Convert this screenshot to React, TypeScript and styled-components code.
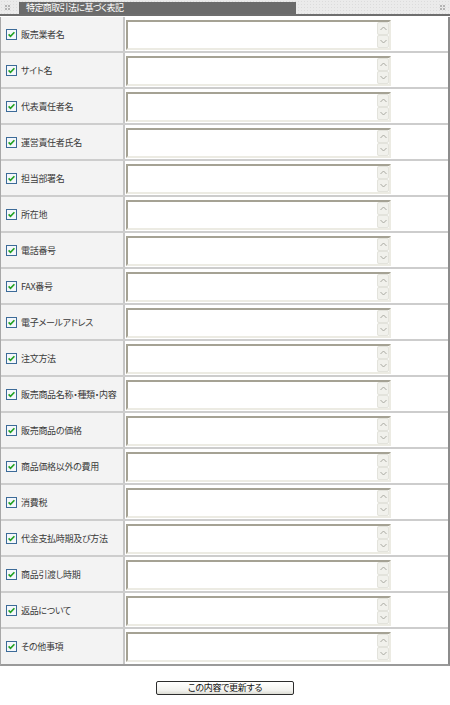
import styled, { createGlobalStyle } from "styled-components";

const FIELDS = [
  "販売業者名",
  "サイト名",
  "代表責任者名",
  "運営責任者氏名",
  "担当部署名",
  "所在地",
  "電話番号",
  "FAX番号",
  "電子メールアドレス",
  "注文方法",
  "販売商品名称・種類・内容",
  "販売商品の価格",
  "商品価格以外の費用",
  "消費税",
  "代金支払時期及び方法",
  "商品引渡し時期",
  "返品について",
  "その他事項",
];

const GlobalStyle = createGlobalStyle`
  body {
    margin: 0;
    background: #ffffff;
    font-family: "Noto Sans CJK JP", "Liberation Sans", sans-serif;
  }
`;

const Page = styled.div`
  width: 450px;
`;

const Header = styled.div`
  display: flex;
  align-items: center;
  height: 14px;
  background-color: #ebebeb;
  background-image: radial-gradient(#dcdcdc 0.6px, transparent 0.8px);
  background-size: 3px 3px;
  border-bottom: 2px solid #6e6e6e;
`;

const Grip = styled.div<{ $right?: boolean }>`
  display: grid;
  grid-template-columns: 2px 2px;
  grid-template-rows: 2px 2px;
  gap: 1px;
  margin: 0 ${(p) => (p.$right ? "5px" : "9px")} 0 ${(p) => (p.$right ? "0" : "5px")};

  span {
    background: #b4b4b4;
  }
`;

const Tab = styled.div`
  width: 270px;
  height: 12px;
  margin-top: 1px;
  padding-left: 7px;
  background: #6b6b6b;
  color: #ffffff;
  font-size: 9px;
  line-height: 12px;
  letter-spacing: -0.6px;
  font-feature-settings: "palt";
  white-space: nowrap;
`;

const Spacer = styled.div`
  flex: 1;
`;

const Table = styled.div`
  margin-top: 1px;
  border-left: 1px solid #a8a8a8;
  border-right: 2px solid #8c8c8c;
  border-bottom: 2px solid #9a9a9a;
`;

const Row = styled.div`
  display: flex;
  height: 34px;
  border-bottom: 2px solid #cdcdcd;

  &:last-child {
    border-bottom: none;
    height: 35px;
  }
`;

const Label = styled.label`
  display: flex;
  align-items: center;
  gap: 4px;
  width: 117px;
  padding-left: 5px;
  background: #f3f3f3;
  border-right: 2px solid #c6c6c6;
  color: #3a3a3a;
  font-size: 9px;
  letter-spacing: -0.3px;
  font-feature-settings: "palt";
  white-space: nowrap;
`;

const Value = styled.div`
  flex: 1;
  padding: 3px 0 0 1px;
  background: #ffffff;
`;

const TextBox = styled.div`
  display: flex;
  width: 261px;
  height: 26px;
  border-style: solid;
  border-width: 2px;
  border-color: #a5a294 #ecebe3 #ecebe3 #a5a294;
  background: #ffffff;
`;

const Area = styled.textarea`
  flex: 1;
  border: none;
  padding: 0;
  resize: none;
  outline: none;
  background: transparent;
`;

const Rail = styled.div`
  display: flex;
  flex-direction: column;
  justify-content: space-between;
  width: 12px;
  background: #fbfbf8;
`;

const Arrow = styled.div`
  display: flex;
  align-items: center;
  justify-content: center;
  height: 11px;
  background: #f1f1ec;
  border: 1px solid #e3e3dc;
  border-radius: 2px;
`;

const Footer = styled.div`
  display: flex;
  justify-content: center;
  padding-top: 15px;
`;

const Submit = styled.button`
  width: 138px;
  height: 14px;
  padding: 0;
  border: 1px solid #2c2c2c;
  border-radius: 2px;
  background: linear-gradient(#ffffff, #f2f2ee 70%, #dcdcd4);
  color: #111111;
  font-family: "Noto Sans CJK JP", sans-serif;
  font-size: 9px;
  line-height: 12px;
  letter-spacing: -0.3px;
  font-feature-settings: "palt";
`;

const CheckIcon = () => (
  <svg width="11" height="11" viewBox="0 0 11 11">
    <rect x="0.5" y="0.5" width="10" height="10" fill="#f4f7fb" stroke="#3c6b98" />
    <path d="M2.6 5.4 L4.5 7.4 L8.4 3.2" fill="none" stroke="#21a121" strokeWidth="1.6" />
  </svg>
);

const Chevron = ({ up }: { up?: boolean }) => (
  <svg width="7" height="5" viewBox="0 0 7 5">
    <path
      d={up ? "M0.5 4 L3.5 1 L6.5 4" : "M0.5 1 L3.5 4 L6.5 1"}
      fill="none"
      stroke="#a8a8a0"
      strokeWidth="1"
    />
  </svg>
);

export default function App() {
  return (
    <Page>
      <GlobalStyle />
      <Header>
        <Grip>
          <span />
          <span />
          <span />
          <span />
        </Grip>
        <Tab>特定商取引法に基づく表記</Tab>
        <Spacer />
        <Grip $right>
          <span />
          <span />
          <span />
          <span />
        </Grip>
      </Header>

      <Table>
        {FIELDS.map((name) => (
          <Row key={name}>
            <Label>
              <CheckIcon />
              {name}
            </Label>
            <Value>
              <TextBox>
                <Area />
                <Rail>
                  <Arrow>
                    <Chevron up />
                  </Arrow>
                  <Arrow>
                    <Chevron />
                  </Arrow>
                </Rail>
              </TextBox>
            </Value>
          </Row>
        ))}
      </Table>

      <Footer>
        <Submit type="button">この内容で更新する</Submit>
      </Footer>
    </Page>
  );
}
